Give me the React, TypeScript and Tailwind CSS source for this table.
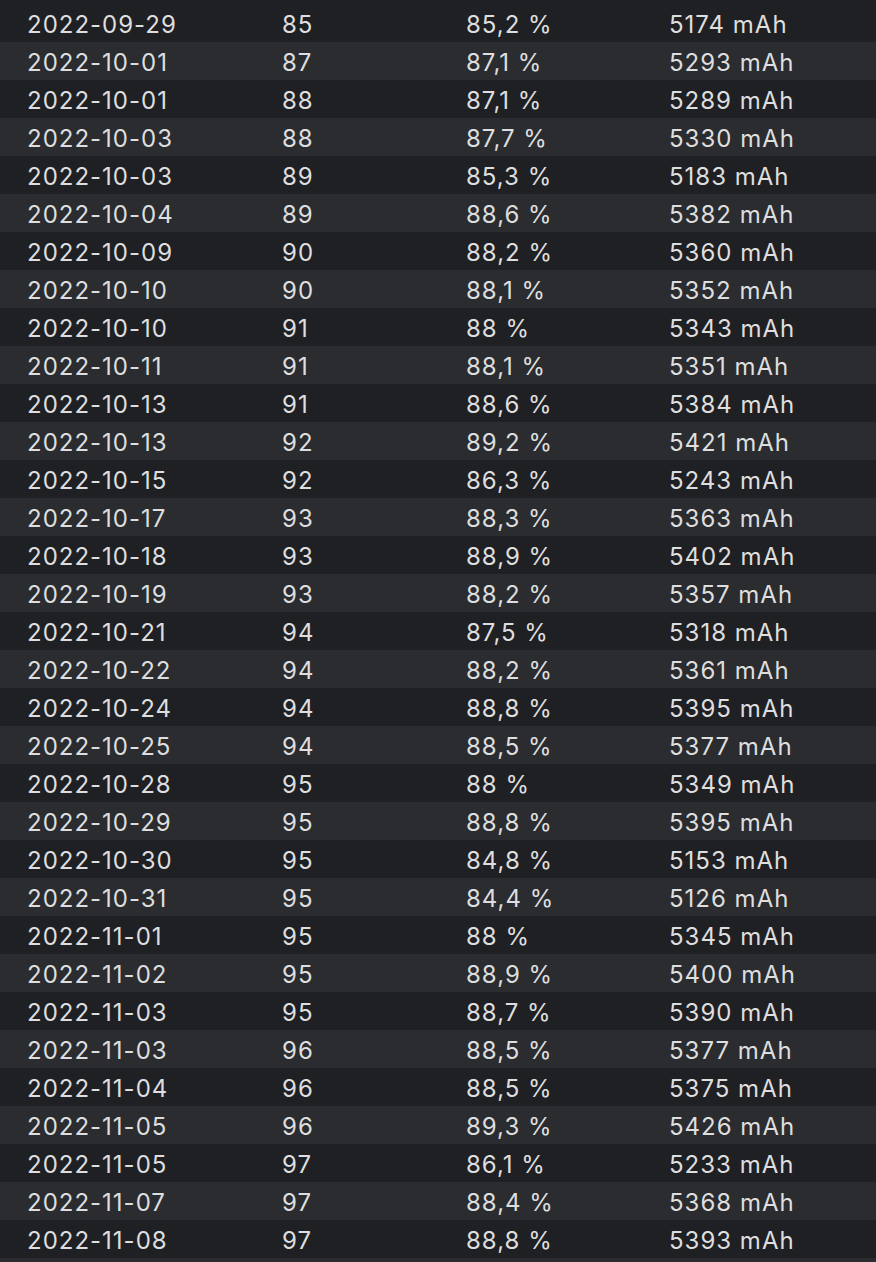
const ROWS: [string, string, string, string][] = [
  ["2022-09-29", "85", "85,2 %", "5174 mAh"],
  ["2022-10-01", "87", "87,1 %", "5293 mAh"],
  ["2022-10-01", "88", "87,1 %", "5289 mAh"],
  ["2022-10-03", "88", "87,7 %", "5330 mAh"],
  ["2022-10-03", "89", "85,3 %", "5183 mAh"],
  ["2022-10-04", "89", "88,6 %", "5382 mAh"],
  ["2022-10-09", "90", "88,2 %", "5360 mAh"],
  ["2022-10-10", "90", "88,1 %", "5352 mAh"],
  ["2022-10-10", "91", "88 %", "5343 mAh"],
  ["2022-10-11", "91", "88,1 %", "5351 mAh"],
  ["2022-10-13", "91", "88,6 %", "5384 mAh"],
  ["2022-10-13", "92", "89,2 %", "5421 mAh"],
  ["2022-10-15", "92", "86,3 %", "5243 mAh"],
  ["2022-10-17", "93", "88,3 %", "5363 mAh"],
  ["2022-10-18", "93", "88,9 %", "5402 mAh"],
  ["2022-10-19", "93", "88,2 %", "5357 mAh"],
  ["2022-10-21", "94", "87,5 %", "5318 mAh"],
  ["2022-10-22", "94", "88,2 %", "5361 mAh"],
  ["2022-10-24", "94", "88,8 %", "5395 mAh"],
  ["2022-10-25", "94", "88,5 %", "5377 mAh"],
  ["2022-10-28", "95", "88 %", "5349 mAh"],
  ["2022-10-29", "95", "88,8 %", "5395 mAh"],
  ["2022-10-30", "95", "84,8 %", "5153 mAh"],
  ["2022-10-31", "95", "84,4 %", "5126 mAh"],
  ["2022-11-01", "95", "88 %", "5345 mAh"],
  ["2022-11-02", "95", "88,9 %", "5400 mAh"],
  ["2022-11-03", "95", "88,7 %", "5390 mAh"],
  ["2022-11-03", "96", "88,5 %", "5377 mAh"],
  ["2022-11-04", "96", "88,5 %", "5375 mAh"],
  ["2022-11-05", "96", "89,3 %", "5426 mAh"],
  ["2022-11-05", "97", "86,1 %", "5233 mAh"],
  ["2022-11-07", "97", "88,4 %", "5368 mAh"],
  ["2022-11-08", "97", "88,8 %", "5393 mAh"],
]

export default function App() {
  return (
    <div
      className="h-[1262px] w-[876px] overflow-hidden bg-[#1f2024] pt-1 text-[24px] tracking-[1px] text-[#dedede]"
      style={{ fontFamily: "Inter, 'Liberation Sans', sans-serif" }}
    >
      {ROWS.map((row, i) => (
        <div
          key={i}
          className={`flex h-[38px] items-center pt-[4px] ${i % 2 === 0 ? "bg-[#1f2024]" : "bg-[#2a2c30]"}`}
        >
          <span className="w-[255px] pl-[27px]">{row[0]}</span>
          <span className="w-[184px] pl-[27px]">{row[1]}</span>
          <span className="w-[203px] pl-[27px]">{row[2]}</span>
          <span className="pl-[27px]">{row[3]}</span>
        </div>
      ))}
      {/* next row, cut off at the bottom */}
      <div className="h-[38px] bg-[#2a2c30]" />
    </div>
  )
}
